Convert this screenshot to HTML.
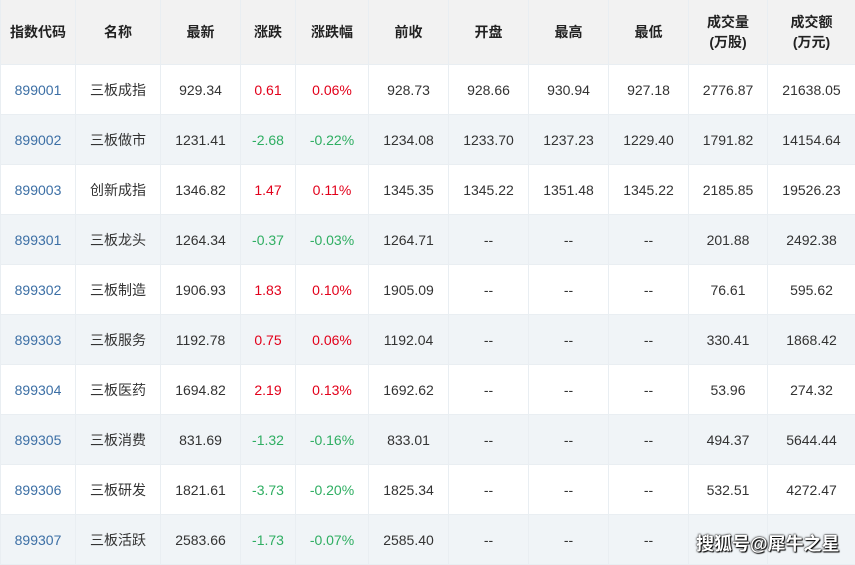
<!DOCTYPE html>
<html><head><meta charset="utf-8"><style>
body{margin:0;width:855px;height:562px;overflow:hidden;background:#fff;font-family:"Liberation Sans","Noto Sans CJK SC",sans-serif;font-size:14px;color:#333}
table{border-collapse:collapse;table-layout:fixed;width:855px}
td,th{border:1px solid #e9eef2;text-align:center;padding:0;height:49px}
th{background:#f2f2f2;height:64px;font-weight:bold;color:#222;line-height:20px;border-top:0}
tr:nth-child(odd) td{background:#f0f4f7}
td.c{color:#3c6fa5}
.r{color:#e2001a}.g{color:#2fae62}
.wm{position:absolute;left:696px;top:530px;color:#fff;font-size:18px;font-weight:bold;text-shadow:0 0 2px #000,0 0 1px #000,1px 1px 1px #000}
</style></head><body>
<table>
<colgroup><col style="width:75px"><col style="width:85px"><col style="width:80px"><col style="width:55px"><col style="width:73px"><col style="width:80px"><col style="width:80px"><col style="width:80px"><col style="width:80px"><col style="width:79px"><col style="width:88px"></colgroup>
<tr><th>指数代码</th><th>名称</th><th>最新</th><th>涨跌</th><th>涨跌幅</th><th>前收</th><th>开盘</th><th>最高</th><th>最低</th><th>成交量<br>(万股)</th><th>成交额<br>(万元)</th></tr>
<tr><td class="c">899001</td><td>三板成指</td><td>929.34</td><td class="r">0.61</td><td class="r">0.06%</td><td>928.73</td><td>928.66</td><td>930.94</td><td>927.18</td><td>2776.87</td><td>21638.05</td></tr>
<tr><td class="c">899002</td><td>三板做市</td><td>1231.41</td><td class="g">-2.68</td><td class="g">-0.22%</td><td>1234.08</td><td>1233.70</td><td>1237.23</td><td>1229.40</td><td>1791.82</td><td>14154.64</td></tr>
<tr><td class="c">899003</td><td>创新成指</td><td>1346.82</td><td class="r">1.47</td><td class="r">0.11%</td><td>1345.35</td><td>1345.22</td><td>1351.48</td><td>1345.22</td><td>2185.85</td><td>19526.23</td></tr>
<tr><td class="c">899301</td><td>三板龙头</td><td>1264.34</td><td class="g">-0.37</td><td class="g">-0.03%</td><td>1264.71</td><td>--</td><td>--</td><td>--</td><td>201.88</td><td>2492.38</td></tr>
<tr><td class="c">899302</td><td>三板制造</td><td>1906.93</td><td class="r">1.83</td><td class="r">0.10%</td><td>1905.09</td><td>--</td><td>--</td><td>--</td><td>76.61</td><td>595.62</td></tr>
<tr><td class="c">899303</td><td>三板服务</td><td>1192.78</td><td class="r">0.75</td><td class="r">0.06%</td><td>1192.04</td><td>--</td><td>--</td><td>--</td><td>330.41</td><td>1868.42</td></tr>
<tr><td class="c">899304</td><td>三板医药</td><td>1694.82</td><td class="r">2.19</td><td class="r">0.13%</td><td>1692.62</td><td>--</td><td>--</td><td>--</td><td>53.96</td><td>274.32</td></tr>
<tr><td class="c">899305</td><td>三板消费</td><td>831.69</td><td class="g">-1.32</td><td class="g">-0.16%</td><td>833.01</td><td>--</td><td>--</td><td>--</td><td>494.37</td><td>5644.44</td></tr>
<tr><td class="c">899306</td><td>三板研发</td><td>1821.61</td><td class="g">-3.73</td><td class="g">-0.20%</td><td>1825.34</td><td>--</td><td>--</td><td>--</td><td>532.51</td><td>4272.47</td></tr>
<tr><td class="c">899307</td><td>三板活跃</td><td>2583.66</td><td class="g">-1.73</td><td class="g">-0.07%</td><td>2585.40</td><td>--</td><td>--</td><td>--</td><td></td><td></td></tr>
</table>
<div class="wm">搜狐号@犀牛之星</div>
</body></html>
